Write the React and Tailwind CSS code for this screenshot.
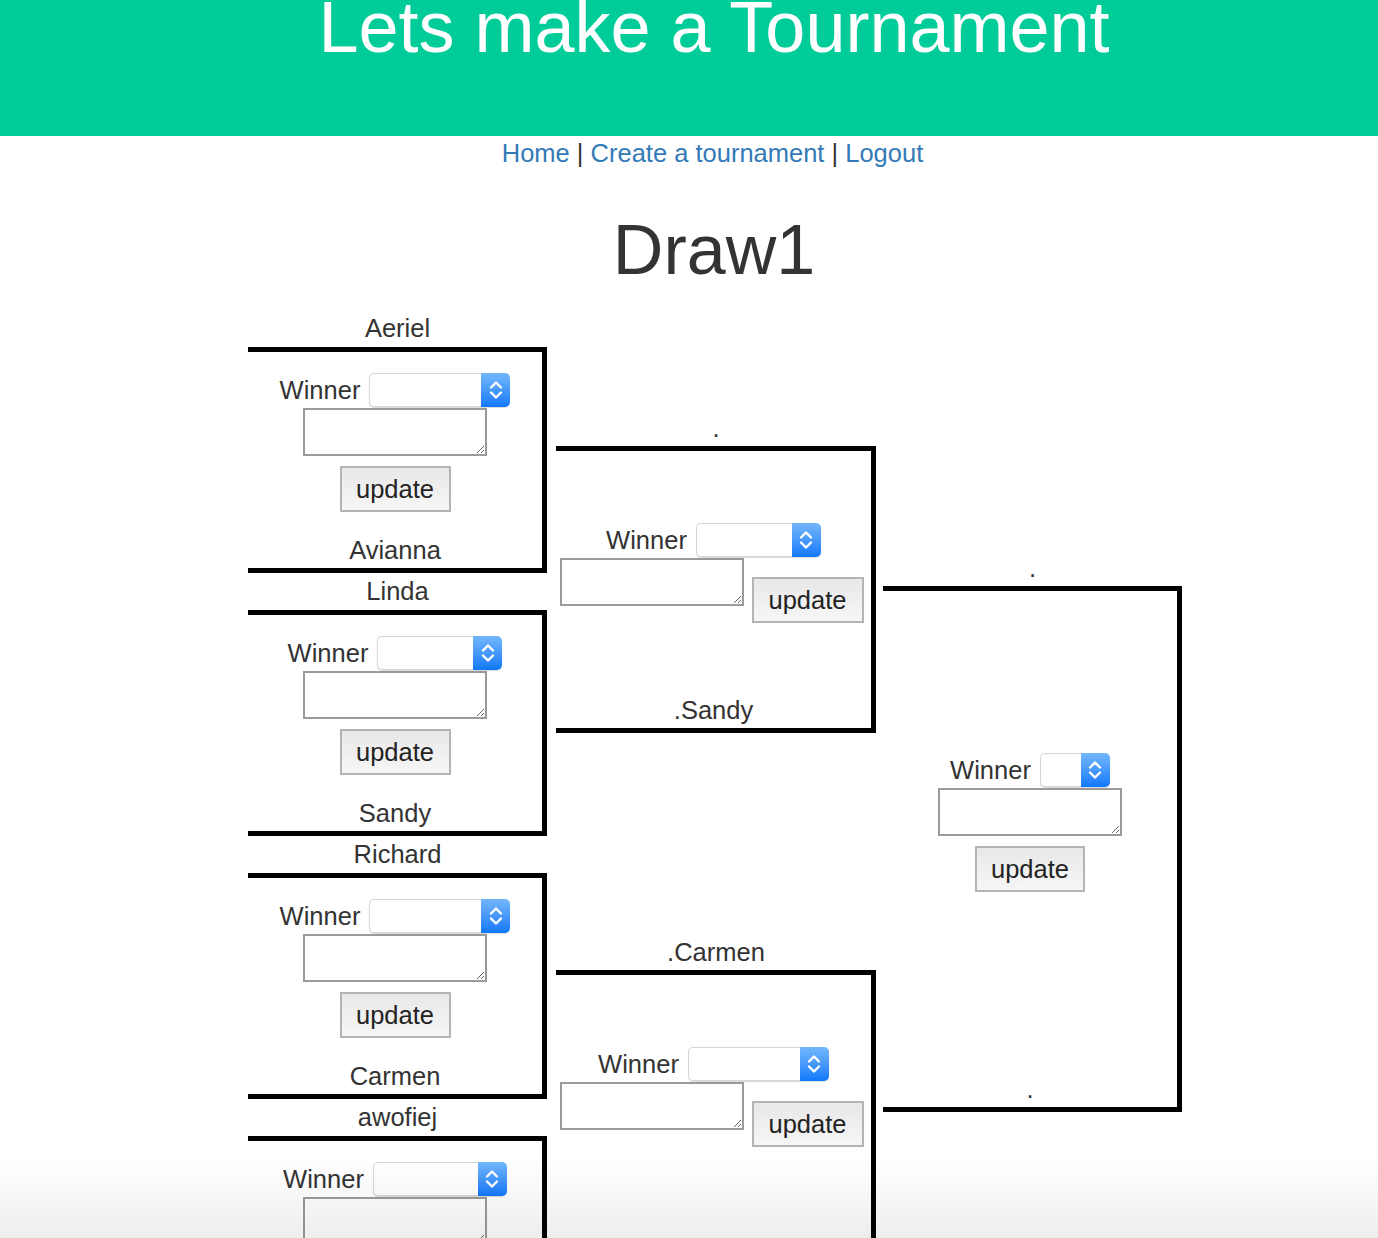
import React from 'react';

// Native-looking mac select: white field + blue stepper
const Picker = ({ width }) => (
  <div className={`${width} h-[34px] flex rounded-[5px] shadow-[0_1px_1px_rgba(0,0,0,0.15)]`}>
    <div className="flex-1 bg-white border border-r-0 border-[#d6d6d6] rounded-l-[5px]" />
    <div className="w-[29px] flex items-center justify-center rounded-r-[5px] bg-gradient-to-b from-[#72b7fb] to-[#0a78fa]">
      <svg width="16" height="26" viewBox="0 0 16 26" fill="none" stroke="white" strokeWidth="2.4" strokeLinecap="round" strokeLinejoin="round">
        <path d="M3 10.5 L8 5.5 L13 10.5" />
        <path d="M3 15.5 L8 20.5 L13 15.5" />
      </svg>
    </div>
  </div>
);

const WinnerRow = ({ width }) => (
  <div className="h-[34px] flex items-center justify-center gap-[9px]">
    <span>Winner</span>
    <Picker width={width} />
  </div>
);

const Notes = ({ className = '' }) => (
  <textarea className={`block w-[184px] h-[48px] border-2 border-[#9a9a9a] bg-white ${className}`} />
);

const UpdateBtn = ({ className = '' }) => (
  <button className={`h-[46px] border-2 border-[#b4b4b4] bg-gradient-to-b from-[#e8e8e8] to-[#f6f6f6] text-[#222] ${className}`}>
    update
  </button>
);

// Round 1 match: names top and bottom, form stacked
const FirstRound = ({ top, bottom, width }) => (
  <div>
    <div className="h-[37px] leading-[37px] text-center">{top}</div>
    <div className="h-[226px] border-y-[5px] border-r-[5px] border-black flex flex-col items-center pt-[21px]">
      <WinnerRow width={width} />
      <Notes className="mt-px" />
      <UpdateBtn className="mt-[10px] w-[111px]" />
      <div className="mt-auto h-[36px] leading-[36px]">{bottom}</div>
    </div>
  </div>
);

// Round 2 match: textarea and button sit side by side
const SecondRound = ({ top, bottom, width }) => (
  <div>
    <div className="h-[36px] leading-[36px] text-center">{top}</div>
    <div className="h-[287px] border-y-[5px] border-r-[5px] border-black flex flex-col items-center pt-[72px]">
      <WinnerRow width={width} />
      <div className="mt-px -ml-[4px] flex items-start gap-[8px]">
        <Notes />
        <UpdateBtn className="mt-[19px] h-[45px] w-[112px]" />
      </div>
      <div className="mt-auto h-[36px] leading-[36px]">{bottom}</div>
    </div>
  </div>
);

export default function App() {
  return (
    <div className="relative min-h-[1238px] bg-white text-[#333] text-[25.5px] font-['Liberation_Sans',Arial,sans-serif] overflow-hidden">
      <header className="h-[136px] bg-[#00cc9a] overflow-hidden pl-[50px]">
        <h1 className="text-center text-white text-[72px] leading-none mt-[-9px]">Lets make a Tournament</h1>
      </header>

      <div className="pl-[50px]">
        <nav className="mt-[2px] text-center h-[30px] leading-[30px] -ml-[3px]">
          <a href="#" className="text-[#337ab7]">Home</a> | <a href="#" className="text-[#337ab7]">Create a tournament</a> | <a href="#" className="text-[#337ab7]">Logout</a>
        </nav>
        <h2 className="mt-[47px] text-center text-[70px] leading-none">Draw1</h2>
      </div>

      <div className="mt-[25px] pl-[248px] flex items-start">
        <div className="w-[299px] shrink-0">
          <FirstRound top="Aeriel" bottom="Avianna" width="w-[141px]" />
          <FirstRound top="Linda" bottom="Sandy" width="w-[125px]" />
          <FirstRound top="Richard" bottom="Carmen" width="w-[141px]" />
          <FirstRound top="awofiej" bottom="" width="w-[134px]" />
        </div>

        <div className="w-[320px] shrink-0 ml-[9px] mt-[100px]">
          <SecondRound top="." bottom=".Sandy" width="w-[125px]" />
          <div className="h-[201px]" />
          <SecondRound top=".Carmen" bottom="" width="w-[141px]" />
        </div>

        <div className="w-[299px] shrink-0 ml-[7px] mt-[240px]">
          <div className="h-[36px] leading-[36px] text-center">.</div>
          <div className="h-[526px] border-y-[5px] border-r-[5px] border-black flex flex-col items-center pt-[162px]">
            <WinnerRow width="w-[70px]" />
            <Notes className="mt-[1px]" />
            <UpdateBtn className="mt-[10px] w-[110px]" />
            <div className="mt-auto h-[36px] leading-[36px]">.</div>
          </div>
        </div>
      </div>

      <div className="pointer-events-none absolute left-0 right-0 top-[1160px] h-[78px] bg-gradient-to-b from-black/0 to-black/[0.07]" />
    </div>
  );
}
